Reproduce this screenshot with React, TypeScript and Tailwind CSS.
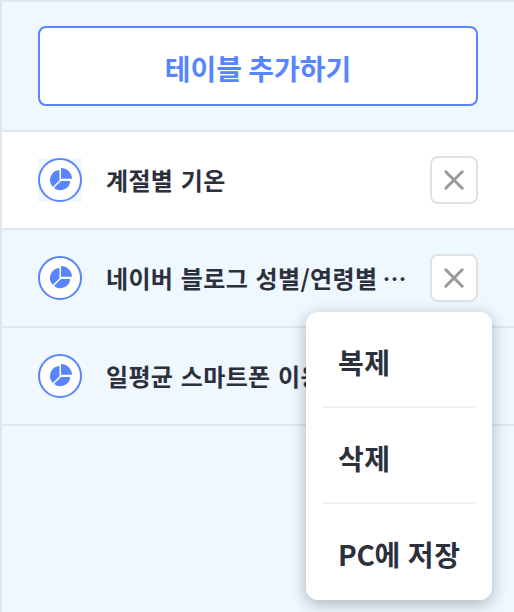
const rows = [
  { name: '계절별 기온', more: false, active: true },
  { name: '네이버 블로그 성별/연령별', more: true, active: false },
  { name: '일평균 스마트폰 이용', more: false, active: false },
];

function PieIcon() {
  return (
    <svg viewBox="0 0 44 44" className="size-11 shrink-0 bg-[#eff7ff]">
      <circle cx="22" cy="22" r="21" fill="#fff" stroke="#5885fe" strokeWidth="2" />
      <g fill="#5885fe">
        <path d="M23 10a11 10.8 0 0 1 11 10.8H23Z" />
        <path d="M21.5 12V22.2L14.8 28.9A10 10 0 0 1 21.5 12Z" />
        <path d="M22.9 22.9H32.2A10 9.8 0 0 1 16 30Z" />
      </g>
    </svg>
  );
}

function RemoveButton() {
  return (
    <button className="flex size-12 shrink-0 items-center justify-center rounded-lg border-2 border-[#e1e1e1] bg-white">
      <svg viewBox="0 0 20 20" className="size-5" fill="none" stroke="#999" strokeWidth="3" strokeLinecap="round">
        <path d="M1.8 1.8 18.2 18.2M18.2 1.8 1.8 18.2" />
      </svg>
    </button>
  );
}

function ContextMenu() {
  return (
    <div className="absolute top-[310px] left-[304px] flex h-72 w-[186px] flex-col rounded-xl bg-white px-4 text-[28px] font-bold tracking-[0.6px] text-[#2c303c] shadow-[0_4px_16px_rgba(0,30,40,0.3)]">
      <div className="flex h-24 items-center border-b-2 border-[#f2f2f2] pt-1.5 pl-4">복제</div>
      <div className="flex h-24 items-center border-b-2 border-[#f2f2f2] pt-1.5 pl-4">삭제</div>
      <div className="flex h-24 items-center pt-1 pl-4 whitespace-nowrap">
        <span className="tracking-[-0.3px]">PC</span>에 저장
      </div>
    </div>
  );
}

export default function App() {
  return (
    <div className="relative h-[612px] w-[514px] overflow-hidden border-t-2 border-l-2 border-[#dbe8f2] bg-[#eff7ff] font-['Noto_Sans_CJK_KR',sans-serif]">
      <div className="h-[130px] border-b-2 border-[#dbe8f2] px-9 pt-6">
        <button className="flex h-20 w-[440px] items-center justify-center rounded-lg border-2 border-[#5885fe] bg-white pt-1 text-[28px] font-bold text-[#5885fe]">
          테이블 추가하기
        </button>
      </div>
      {rows.map((row) => (
        <div
          key={row.name}
          className={`flex h-[98px] items-center border-b-2 border-[#dbe8f2] pl-9 ${row.active ? 'bg-white' : ''}`}
        >
          <PieIcon />
          <div className="ml-6 flex w-[324px] pb-px text-2xl leading-10 font-bold tracking-[0.35px] whitespace-nowrap text-[#2c303c] [word-spacing:1.7px]">
            <span>{row.name}</span>
            {row.more && <span className="ml-[5px]">⋯</span>}
          </div>
          <RemoveButton />
        </div>
      ))}
      <ContextMenu />
    </div>
  );
}
